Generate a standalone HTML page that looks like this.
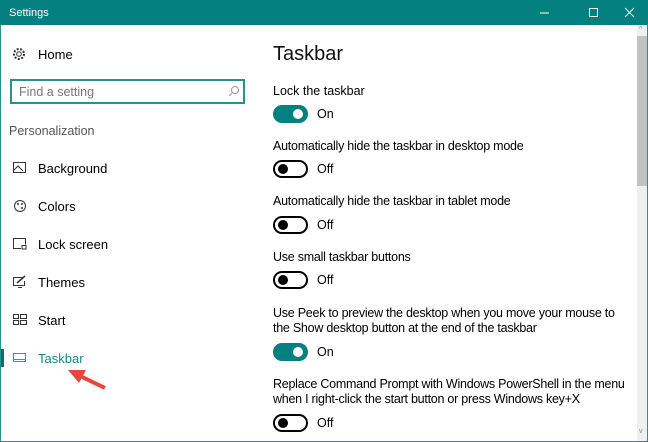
<!DOCTYPE html>
<html><head><style>
*{margin:0;padding:0;box-sizing:border-box}
body{width:648px;height:442px;overflow:hidden;background:#fff;font-family:"Liberation Sans",sans-serif;color:#000;position:relative}
.a{position:absolute;white-space:nowrap}
.title{left:0;top:0;width:648px;height:25px;background:#048080;color:#fff;font-size:11px;padding:7px 0 0 9px}
.frame{left:0;top:25px;width:648px;height:417px;border:1px solid #2a9090;border-top:none}
.t{font-size:12.5px}
.l{font-size:12.5px;letter-spacing:-0.25px}
.nav{left:38px;font-size:13px}
.ic{left:13px}
.tog{position:absolute;left:273px;width:35px;height:18px;border-radius:9px}
.on{background:#048080}
.on::after{content:"";position:absolute;right:5px;top:4px;width:10px;height:10px;border-radius:50%;background:#fff}
.off{border:2px solid #000}
.off::after{content:"";position:absolute;left:3px;top:2px;width:10px;height:10px;border-radius:50%;background:#000}
.st{left:317px;font-size:12.5px}
</style></head><body>
<div class="a title">Settings</div>
<svg class="a" style="left:540px;top:6px" width="100" height="14"><line x1="0" y1="7" x2="9" y2="7" stroke="#fff"/><rect x="49.5" y="2.5" width="8" height="8" fill="none" stroke="#fff"/><path d="M85 2L94 11M94 2L85 11" stroke="#fff"/></svg>
<div class="a frame"></div>
<div class="a" style="left:637px;top:25px;width:10px;height:416px;background:#f0f0f0"></div>
<div class="a" style="left:637px;top:36px;width:10px;height:150px;background:#c2c2c2"></div>
<div class="a" style="left:639px;top:26px;font-size:7px;color:#888">^</div>
<div class="a" style="left:639px;top:428px;font-size:7px;color:#888">v</div>

<svg class="a" style="left:12px;top:47px" width="14" height="14" viewBox="0 0 14 14"><circle cx="7" cy="7" r="2.3" fill="none" stroke="#333"/><circle cx="7" cy="7" r="5" fill="none" stroke="#333" stroke-dasharray="2 1.5" stroke-width="2"/></svg>
<div class="a nav" style="top:47px">Home</div>
<div class="a" style="left:10px;top:79px;width:235px;height:25px;border:2px solid #2a8f8f"></div>
<div class="a" style="left:19px;top:85px;font-size:12.5px;color:#777">Find a setting</div>
<svg class="a" style="left:228px;top:85px" width="12" height="12"><circle cx="7" cy="5" r="3.5" fill="none" stroke="#999"/><line x1="4.5" y1="7.5" x2="1" y2="11" stroke="#999"/></svg>
<div class="a" style="left:9px;top:124px;font-size:12.5px;color:#555">Personalization</div>

<svg class="a ic" style="top:162px" width="14" height="12"><rect x=".5" y=".5" width="12" height="10" fill="none" stroke="#333"/><path d="M1 8l4-4 5 5" fill="none" stroke="#333"/></svg>
<div class="a nav" style="top:161px">Background</div>
<svg class="a ic" style="top:199px" width="14" height="14"><circle cx="7" cy="7" r="5.5" fill="none" stroke="#333"/><circle cx="5" cy="5" r="1" fill="#333"/><circle cx="9" cy="5" r="1" fill="#333"/><circle cx="9" cy="9" r="1" fill="#333"/></svg>
<div class="a nav" style="top:199px">Colors</div>
<svg class="a ic" style="top:238px" width="14" height="12"><path d="M8 10.5H.5V.5h12v6" fill="none" stroke="#333"/><rect x="9" y="7.5" width="4" height="3.5" fill="none" stroke="#333"/></svg>
<div class="a nav" style="top:237px">Lock screen</div>
<svg class="a ic" style="top:275px" width="14" height="13"><path d="M10 2.5H.5v8h11V6" fill="none" stroke="#333"/><path d="M4 8l8-7" stroke="#333" stroke-width="1.5"/><path d="M5 12.5h4" stroke="#333"/></svg>
<div class="a nav" style="top:275px">Themes</div>
<svg class="a ic" style="top:314px" width="14" height="12"><rect x=".5" y=".5" width="5" height="4" fill="none" stroke="#333"/><rect x="7.5" y=".5" width="6" height="4" fill="none" stroke="#333"/><rect x=".5" y="6.5" width="5" height="4" fill="none" stroke="#333"/><rect x="7.5" y="6.5" width="6" height="4" fill="none" stroke="#333"/></svg>
<div class="a nav" style="top:313px">Start</div>
<div class="a" style="left:1px;top:349px;width:3px;height:18px;background:#047070"></div>
<svg class="a ic" style="top:353px" width="14" height="10"><rect x=".5" y=".5" width="12" height="8" fill="none" stroke="#2a9a9a"/><line x1="1" y1="6.5" x2="12" y2="6.5" stroke="#2a9a9a"/></svg>
<div class="a nav" style="top:351px;color:#138a8a">Taskbar</div>
<svg class="a" style="left:64px;top:364px" width="44" height="28"><line x1="41" y1="24" x2="14" y2="11" stroke="#e8473d" stroke-width="4"/><path d="M4 6L22 6L15 19Z" fill="#e8473d"/></svg>

<div class="a" style="left:273px;top:43px;font-size:20px;color:#111">Taskbar</div>
<div class="a t" style="left:273px;top:84px">Lock the taskbar</div>
<div class="tog on" style="top:105px"></div><div class="a st" style="top:107px">On</div>
<div class="a l" style="left:273px;top:139px">Automatically hide the taskbar in desktop mode</div>
<div class="tog off" style="top:160px"></div><div class="a st" style="top:162px">Off</div>
<div class="a l" style="left:273px;top:194px">Automatically hide the taskbar in tablet mode</div>
<div class="tog off" style="top:216px"></div><div class="a st" style="top:218px">Off</div>
<div class="a l" style="left:273px;top:250px">Use small taskbar buttons</div>
<div class="tog off" style="top:271px"></div><div class="a st" style="top:273px">Off</div>
<div class="a l" style="left:273px;top:306px;line-height:15px">Use Peek to preview the desktop when you move your mouse to<br>the Show desktop button at the end of the taskbar</div>
<div class="tog on" style="top:343px"></div><div class="a st" style="top:345px">On</div>
<div class="a l" style="left:273px;top:377px;line-height:15px">Replace Command Prompt with Windows PowerShell in the menu<br>when I right-click the start button or press Windows key+X</div>
<div class="tog off" style="top:414px"></div><div class="a st" style="top:416px">Off</div>
</body></html>
